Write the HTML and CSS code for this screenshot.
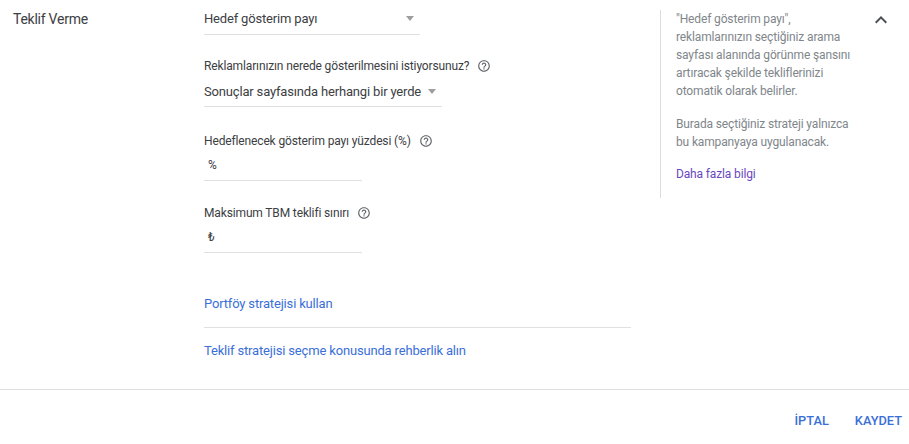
FILE: index.html
```html
<!DOCTYPE html>
<html lang="tr">
<head>
  <meta charset="UTF-8">
  <meta name="viewport" content="width=device-width, initial-scale=1.0">
  <title>Teklif Verme</title>
  <link rel="stylesheet" href="styles.css">
</head>
<body>

<main class="section">
  <h2 class="section-title">Teklif Verme</h2>

  <div class="fields">
    <div class="select select-strategy">
      <span>Hedef gösterim payı</span>
      <span class="caret"></span>
    </div>

    <div class="field-label label-where">
      Reklamlarınızın nerede gösterilmesini istiyorsunuz?
      <svg class="help" viewBox="0 0 24 24"><use href="#help-icon"></use></svg>
    </div>
    <div class="select select-where">
      <span>Sonuçlar sayfasında herhangi bir yerde</span>
      <span class="caret"></span>
    </div>

    <div class="field-label label-share">
      Hedeflenecek gösterim payı yüzdesi (%)
      <svg class="help" viewBox="0 0 24 24"><use href="#help-icon"></use></svg>
    </div>
    <div class="input">%</div>

    <div class="field-label label-bid">
      Maksimum TBM teklifi sınırı
      <svg class="help" viewBox="0 0 24 24"><use href="#help-icon"></use></svg>
    </div>
    <div class="input">₺</div>

    <a class="link link-portfolio" href="#">Portföy stratejisi kullan</a>
    <a class="link link-guide" href="#">Teklif stratejisi seçme konusunda rehberlik alın</a>
  </div>

  <aside class="help-panel">
    <p>"Hedef gösterim payı", reklamlarınızın seçtiğiniz arama sayfası alanında görünme şansını artıracak şekilde tekliflerinizi otomatik olarak belirler.</p>
    <p>Burada seçtiğiniz strateji yalnızca bu kampanyaya uygulanacak.</p>
    <a class="more" href="#">Daha fazla bilgi</a>
  </aside>

  <svg class="collapse" viewBox="0 0 24 24"><path d="M7.41 15.41 12 10.83l4.59 4.58L18 14l-6-6-6 6z"></path></svg>
</main>

<footer class="actions">
  <a class="action" href="#">İPTAL</a>
  <a class="action" href="#">KAYDET</a>
</footer>

<svg class="icon-defs" width="0" height="0">
  <symbol id="help-icon" viewBox="0 0 24 24">
    <path d="M11 18h2v-2h-2v2zm1-16C6.48 2 2 6.48 2 12s4.48 10 10 10 10-4.48 10-10S17.52 2 12 2zm0 18c-4.41 0-8-3.59-8-8s3.59-8 8-8 8 3.59 8 8-3.59 8-8 8zm0-14c-2.21 0-4 1.79-4 4h2c0-1.1.9-2 2-2s2 .9 2 2c0 2-3 1.75-3 5h2c0-2.25 3-2.5 3-5 0-2.21-1.79-4-4-4z"></path>
  </symbol>
</svg>

</body>
</html>
```

FILE: styles.css
```css
body { margin: 0; background: #fff; font-family: Roboto, Arial, sans-serif; color: #3c4043; }
a { text-decoration: none; }

.section { display: flex; height: 389px; border-bottom: 1px solid #e0e0e0; }
.section-title { width: 191px; margin: 10px 0 0 13px; font-size: 14px; line-height: 18px; font-weight: 400; letter-spacing: -0.25px; color: #3c4043; flex: none; }

.fields { width: 427px; flex: none; display: flex; flex-direction: column; align-items: flex-start; font-size: 13px; letter-spacing: -0.17px; }

.select { display: flex; justify-content: space-between; align-items: center; box-sizing: border-box; white-space: nowrap; border-bottom: 1px solid #e0e0e0; }
.select-strategy { width: 216px; height: 35px; padding: 2px 6px 0 0; }
.select-where { width: 238px; height: 33px; padding: 2px 6px 0 0; }
.caret { width: 0; height: 0; border-left: 4.5px solid transparent; border-right: 4.5px solid transparent; border-top: 5px solid #9e9e9e; }

.field-label { display: flex; align-items: center; gap: 8px; height: 16px; font-size: 12px; line-height: 16px; letter-spacing: -0.14px; white-space: nowrap; }
.label-where { margin-top: 23px; }
.label-share { margin-top: 26px; }
.label-bid { margin-top: 24px; }
.help { width: 14px; height: 14px; fill: #5f6368; }

.input { box-sizing: border-box; width: 158px; height: 28px; margin-top: 4px; padding: 0 0 0 4px; font-size: 12px; line-height: 24px; border-bottom: 1px solid #e0e0e0; }

.link { color: #3b6fd8; font-size: 13px; line-height: 18px; }
.link-portfolio { margin-top: 42px; width: 100%; padding-bottom: 14px; border-bottom: 1px solid #e0e0e0; }
.link-guide { margin-top: 14px; }

.help-panel { box-sizing: border-box; width: 205px; height: 188px; margin: 10px 0 0 29px; padding: 0 9px 0 15px; border-left: 1px solid #dadce0; font-size: 12px; line-height: 18px; letter-spacing: -0.14px; color: #80868b; flex: none; }
.help-panel p { margin: 0 0 15px; }
.more { display: block; margin-top: -1px; color: #6a48c0; }

.collapse { width: 24px; height: 24px; margin: 8px 0 0 4px; fill: #4a4f54; flex: none; }

.actions { display: flex; justify-content: flex-end; gap: 26px; padding: 22px 7px 0 0; }
.action { color: #3b6fd8; font-size: 12.8px; font-weight: 500; line-height: 18px; }

.icon-defs { position: absolute; }
```
